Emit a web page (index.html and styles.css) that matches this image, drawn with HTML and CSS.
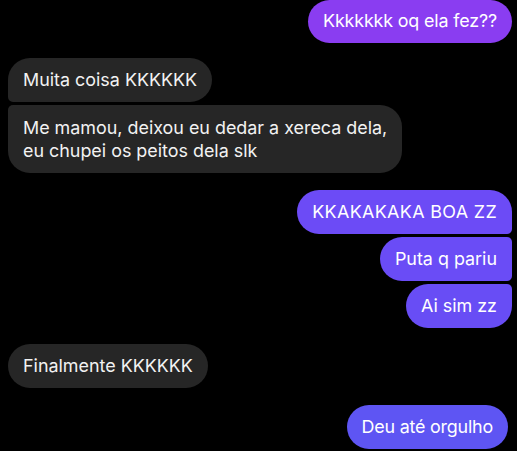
FILE: index.html
```html
<!DOCTYPE html>
<html lang="pt">
<head>
<meta charset="utf-8">
<link rel="stylesheet" href="styles.css">
</head>
<body>
<div class="chat">
  <div class="msg out single c1">Kkkkkkk oq ela fez??</div>
  <div class="group in">
    <div class="msg first">Muita coisa KKKKKK</div>
    <div class="msg last">Me mamou, deixou eu dedar a xereca dela,<br>eu chupei os peitos dela slk</div>
  </div>
  <div class="group out">
    <div class="msg first c2">KKAKAKAKA BOA ZZ</div>
    <div class="msg mid c3">Puta q pariu</div>
    <div class="msg last c4">Ai sim zz</div>
  </div>
  <div class="msg in single">Finalmente KKKKKK</div>
  <div class="msg out single c5">Deu até orgulho</div>
</div>
</body>
</html>
```

FILE: styles.css
```css
html, body {
  margin: 0;
  padding: 0;
  background: #000;
}
body {
  width: 517px;
  height: 451px;
  overflow: hidden;
  font-family: Inter, Roboto, "Noto Sans", sans-serif;
  font-size: 17.9px;
  color: #f2f2f2;
}
.chat {
  display: flex;
  flex-direction: column;
  padding: 0 5px 0 8px;
}
.group {
  display: flex;
  flex-direction: column;
  gap: 3px;
  align-self: stretch;
}
.group.in { align-items: flex-start; }
.group.out { align-items: flex-end; }
.msg {
  box-sizing: border-box;
  padding: 11px 15px;
  line-height: 22px;
  border-radius: 22px;
  width: max-content;
}
.msg.in, .group.in .msg {
  align-self: flex-start;
  background: #262626;
}
.msg.out, .group.out .msg {
  align-self: flex-end;
  color: #fff;
}
.c1 { background: #8a3df1; letter-spacing: -0.15px; }
.c2 { background: #6c4bf6; letter-spacing: 0.35px; }
.c3 { background: #6a4cf6; }
.c4 { background: #684df5; }
.c5 { background: #5e55f3; letter-spacing: -0.2px; }

.group.in .first { border-bottom-left-radius: 5px; }
.group.in .last { border-top-left-radius: 5px; }
.group.out .first { border-bottom-right-radius: 5px; }
.group.out .mid { border-top-right-radius: 5px; border-bottom-right-radius: 5px; }
.group.out .last { border-top-right-radius: 5px; }

.msg.c1 { height: 43px; padding-top: 10px; }
.group.in { margin-top: 15px; }
.group.in .last { line-height: 23px; }
.group.out { margin-top: 17px; }
.msg.in.single { margin-top: 16px; }
.msg.c5 { margin-top: 17px; margin-right: 4px; }
```
